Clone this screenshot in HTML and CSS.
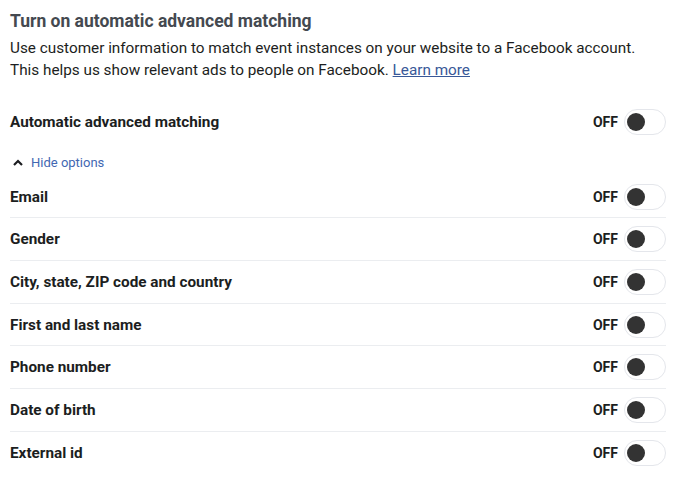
FILE: index.html
```html
<!DOCTYPE html>
<html>
<head>
<meta charset="utf-8">
<link rel="stylesheet" href="styles.css">
</head>
<body>
<div class="panel">
  <h1 class="title">Turn on automatic advanced matching</h1>
  <p class="desc">Use customer information to match event instances on your website to a Facebook account. This helps us show relevant ads to people on Facebook. <a class="link" href="#">Learn more</a></p>
  <div class="row main">
    <span class="label">Automatic advanced matching</span>
    <span class="state">OFF <span class="toggle"><span class="knob"></span></span></span>
  </div>
  <div class="hide"><svg class="chev" width="10" height="7" viewBox="0 0 10 7"><path d="M1 6 L5 2 L9 6" fill="none" stroke="#1c1e21" stroke-width="2.2"/></svg><span>Hide options</span></div>
  <div class="list">
    <div class="row"><span class="label">Email</span><span class="state">OFF <span class="toggle"><span class="knob"></span></span></span></div>
    <div class="row"><span class="label">Gender</span><span class="state">OFF <span class="toggle"><span class="knob"></span></span></span></div>
    <div class="row"><span class="label">City, state, ZIP code and country</span><span class="state">OFF <span class="toggle"><span class="knob"></span></span></span></div>
    <div class="row"><span class="label">First and last name</span><span class="state">OFF <span class="toggle"><span class="knob"></span></span></span></div>
    <div class="row"><span class="label">Phone number</span><span class="state">OFF <span class="toggle"><span class="knob"></span></span></span></div>
    <div class="row"><span class="label">Date of birth</span><span class="state">OFF <span class="toggle"><span class="knob"></span></span></span></div>
    <div class="row"><span class="label">External id</span><span class="state">OFF <span class="toggle"><span class="knob"></span></span></span></div>
  </div>
</div>
</body>
</html>
```

FILE: styles.css
```css
body {
  margin: 0;
  background: #fff;
  font-family: Roboto, "Liberation Sans", sans-serif;
  color: #1c1e21;
}
.panel {
  width: 656px;
  padding: 7px 10px 0;
}
.title {
  margin: 0;
  font-size: 17.5px;
  font-weight: 700;
  color: #444950;
  line-height: 28px;
}
.desc {
  margin: 2px 0 0;
  font-size: 15.3px;
  line-height: 22px;
  color: #1c1e21;
}
.link {
  color: #385898;
  text-decoration: underline;
}
.row {
  display: flex;
  align-items: center;
  justify-content: space-between;
  height: 41.7px;
}
.main {
  margin-top: 20px;
}
.list .row + .row {
  border-top: 1px solid #ebedf0;
}
.label {
  font-size: 15.3px;
  font-weight: 700;
}
.state {
  display: flex;
  align-items: center;
  gap: 6px;
  font-size: 14px;
  font-weight: 700;
}
.toggle {
  display: flex;
  align-items: center;
  width: 38px;
  height: 24px;
  border-radius: 13px;
  border: 1px solid #e4e6eb;
  background: #fff;
  padding: 0 1px;
}
.knob {
  width: 18px;
  height: 18px;
  border-radius: 50%;
  background: #333;
  margin-left: 1px;
}
.hide {
  display: flex;
  align-items: center;
  gap: 8px;
  box-sizing: border-box;
  height: 33px;
  padding: 6px 0 0 3px;
  font-size: 13px;
  color: #4267b2;
}
```
